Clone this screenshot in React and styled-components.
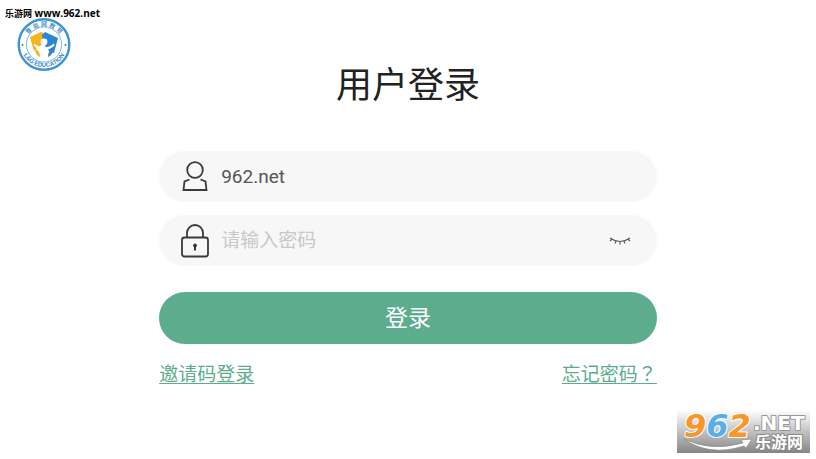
import React from "react";
import styled, { createGlobalStyle } from "styled-components";

const GlobalStyle = createGlobalStyle`
  * { box-sizing: border-box; }
  body { margin: 0; background: #fff; font-family: Roboto, "Noto Sans CJK SC", sans-serif; }
`;

const Page = styled.div`
  position: relative;
  min-height: 100vh;
`;

const Header = styled.header`
  display: flex;
  flex-direction: column;
  align-items: flex-start;
  height: 64px;
  padding: 6px 5px 0;
`;

const SiteTag = styled.span`
  height: 12px;
  color: #000;
  font: bold 10px/14px "Open Sans", "Noto Sans CJK SC", sans-serif;
  white-space: nowrap;
`;

const SiteName = styled.span`
  font-size: 9px;
`;

const Emblem = styled.svg`
  flex: none;
  width: 54px;
  height: 54px;
  margin-left: 12px;
`;

const EmblemText = styled.text`
  fill: #3187c4;
  font-family: "Liberation Sans", "Noto Sans CJK SC", sans-serif;
  font-weight: ${({ $weight }) => $weight};
  font-size: 6px;
  text-anchor: middle;
`;

const Main = styled.main`
  width: 61%;
  margin: 0 auto;
`;

const Title = styled.h1`
  margin: 0;
  padding: 2px 0 45px;
  color: #222;
  font-size: 36px;
  font-weight: 400;
  line-height: 40px;
  text-align: center;
`;

const Form = styled.form`
  display: flex;
  flex-direction: column;
`;

const Field = styled.label`
  display: flex;
  align-items: center;
  gap: 12px;
  height: 51px;
  margin-bottom: 13px;
  padding: 0 24px 0 22px;
  border-radius: 26px;
  background: #f7f7f7;
`;

const FieldIcon = styled.svg`
  flex: none;
  width: 28px;
  height: 34px;
  fill: none;
  stroke: #3a3a3a;
  stroke-width: 1.8;
`;

const Input = styled.input`
  flex: 1;
  min-width: 0;
  height: 32px;
  padding: 0;
  border: 0;
  outline: 0;
  background: transparent;
  color: #555;
  font: inherit;
  font-size: 19px;
  &::placeholder { color: #c8c8c8; opacity: 1; }
`;

const EyeButton = styled.button`
  display: flex;
  padding: 0;
  border: 0;
  background: none;
  cursor: pointer;
`;

const Submit = styled.button`
  height: 52px;
  margin-top: 13px;
  padding: 0 0 4px;
  border: 0;
  border-radius: 26px;
  background: #5bad8e;
  color: #fff;
  font: inherit;
  font-size: 23px;
  cursor: pointer;
`;

const Links = styled.nav`
  display: flex;
  justify-content: space-between;
  margin-top: 17px;
`;

const TextLink = styled.a`
  color: #5bad8e;
  font-size: 19px;
  line-height: 28px;
  text-decoration: underline;
  text-decoration-thickness: 1px;
  text-underline-offset: 2px;
`;

const QuestionMark = styled.span`
  font-family: "Noto Sans CJK TC", sans-serif;
  line-height: 1;
`;

const Watermark = styled.svg`
  position: absolute;
  right: 6px;
  bottom: 6px;
  width: 133px;
  height: 43px;
  overflow: visible;
`;

const MarkText = styled.text`
  fill: ${({ $fill }) => $fill};
  stroke: ${({ $stroke }) => $stroke};
  stroke-width: 2;
  stroke-linejoin: round;
  paint-order: stroke;
  font-family: "DejaVu Sans", "Noto Sans CJK SC", sans-serif;
  font-weight: 700;
  font-style: ${({ $italic }) => ($italic ? "italic" : "normal")};
  font-size: ${({ $size }) => $size}px;
`;

function Logo() {
  return (
    <Emblem viewBox="0 0 54 54" role="img" aria-label="L&G Education">
      <defs>
        <path id="arc-top" d="M8.2 33a19.5 19.5 0 1 1 37.6 0" />
        <path id="arc-bottom" d="M4 22a23.3 23.3 0 1 0 46 0" />
      </defs>
      <circle cx="27" cy="26.5" r="25.3" fill="#fff" stroke="#3e93d2" strokeWidth="2.4" />
      <circle cx="27" cy="26.5" r="17.6" fill="#fff" stroke="#5ba4d9" strokeWidth=".8" />
      <path d="M13 19l11-5q3 0 3 4l-1 8-6 4-3 3z" fill="#f4b51f" />
      <path d="M25 17l3-3 13 6-4 15-4-1-7-9z" fill="#2b86d8" />
      <circle cx="27" cy="24" r="3.4" fill="#fff" />
      <path d="M17 25.500q5 4 10 4t10-4l.5 2q-3 3-6.500 4v7h-8v-7q-4-1-6-4z" fill="#fff" />
      <path d="M18 31q5 1 5 8-5-2-5-8z" fill="#f4b51f" />
      <path d="M36 31q-5 1-5 8 5-2 5-8z" fill="#2b86d8" />
      <EmblemText $weight={500}><textPath href="#arc-top" startOffset="50%">鲁 易 网 教 育</textPath></EmblemText>
      <EmblemText $weight={700}><textPath href="#arc-bottom" startOffset="50%">L&amp;G EDUCATION</textPath></EmblemText>
      <circle cx="5.500" cy="27" r="1" fill="#3187c4" />
      <circle cx="48.500" cy="27" r="1" fill="#3187c4" />
    </Emblem>
  );
}

export default function App() {
  return (
    <Page>
      <GlobalStyle />
      <Header>
        <SiteTag><SiteName>乐游网</SiteName> www.962.net</SiteTag>
        <Logo />
      </Header>
      <Main>
        <Title>用户登录</Title>
        <Form onSubmit={(e) => e.preventDefault()}>
          <Field>
            <FieldIcon viewBox="0 0 28 34" aria-hidden="true">
              <circle cx="14" cy="10" r="7.800" />
              <path d="M8.500 19.500L3.500 21.500L2.500 30H25.500L24.500 21.500L19.500 19.500" />
            </FieldIcon>
            <Input aria-label="用户名" defaultValue="962.net" />
          </Field>
          <Field>
            <FieldIcon viewBox="0 0 28 34" aria-hidden="true">
              <rect x="1" y="13.500" width="26" height="19" rx="2.500" />
              <path d="M6 13.500V9a8 8 0 0 1 16 0v4.500" />
              <circle cx="14" cy="21.500" r="1.500" fill="#333" stroke="#333" strokeWidth="1" />
              <path d="M14 21.500v5" stroke="#333" strokeWidth="2" />
            </FieldIcon>
            <Input type="password" aria-label="密码" placeholder="请输入密码" />
            <EyeButton type="button" aria-label="显示密码">
              <svg width="24" height="10" viewBox="0 0 24 10" fill="none" stroke="#555" strokeWidth="1.1">
                <path d="M1 2q10 7 20 0M3 3l-2 2M7 5l-1 2.500M11 6v2.500M15 5l1 2.500M19 3l2 2" />
              </svg>
            </EyeButton>
          </Field>
          <Submit type="submit">登录</Submit>
        </Form>
        <Links>
          <TextLink href="#invite">邀请码登录</TextLink>
          <TextLink href="#forgot">忘记密码<QuestionMark>？</QuestionMark></TextLink>
        </Links>
      </Main>
      <Watermark viewBox="0 0 133 43" role="img" aria-label="962.NET 乐游网">
        <defs>
          <linearGradient id="shade" x1="0" y1="0" x2="0" y2="1">
            <stop offset="0" stopColor="#fff" />
            <stop offset="1" stopColor="#858585" />
          </linearGradient>
        </defs>
        <rect width="133" height="43" fill="url(#shade)" />
        <MarkText x="7" y="27" $size={32} $italic $fill="#f7962b" $stroke="#fff">
          9<tspan fill="#5aaee8">6</tspan>2
        </MarkText>
        <MarkText x="76" y="20" $size={20} $fill="#fff" $stroke="#999">.NET</MarkText>
        <MarkText x="78" y="38" $size={16} $fill="#fff" $stroke="#888">乐游网</MarkText>
        <path d="M7 29Q34 42 66 33L64 30L75 29L69 38L67 36Q32 47 7 29Z" fill="#fff" stroke="#888" strokeWidth=".7" />
      </Watermark>
    </Page>
  );
}
